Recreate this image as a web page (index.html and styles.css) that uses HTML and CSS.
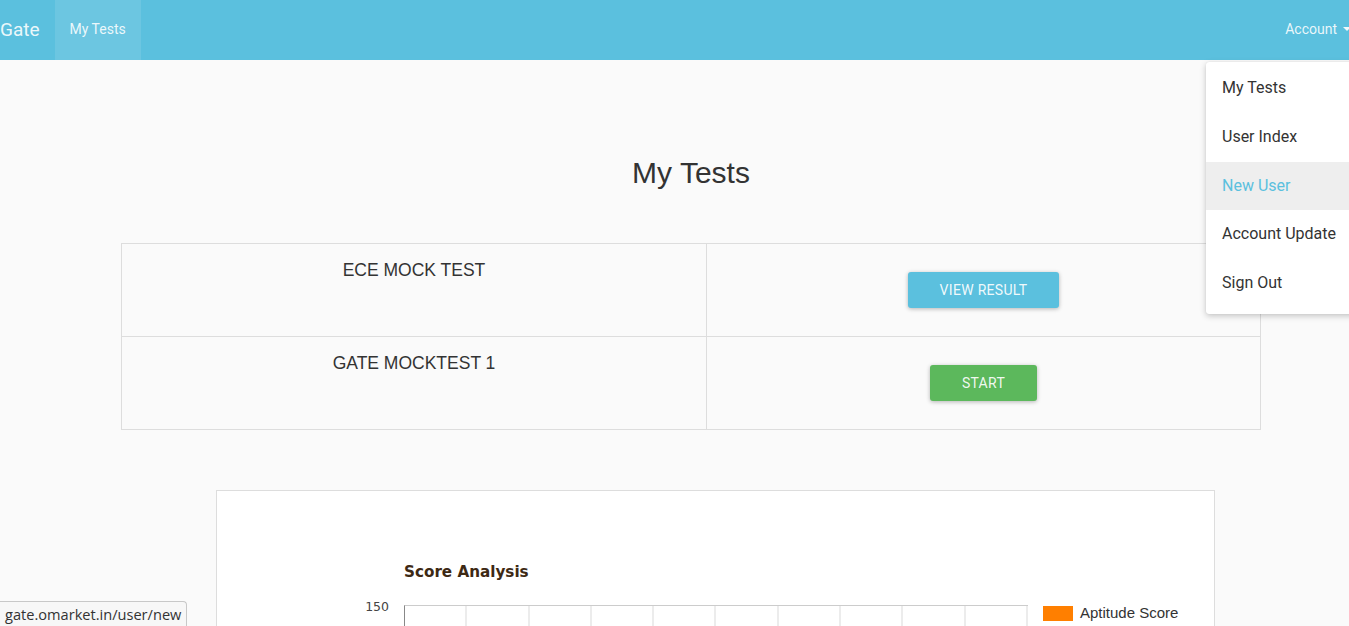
FILE: index.html
```html
<!DOCTYPE html>
<html lang="en">
<head>
<meta charset="utf-8">
<title>My Tests</title>
<link rel="stylesheet" href="styles.css">
</head>
<body>
<div class="page">
  <nav class="navbar">
    <a class="brand" href="#">Gate</a>
    <ul class="nav">
      <li class="nav-item active"><a href="#">My Tests</a></li>
    </ul>
    <ul class="nav nav-right">
      <li class="nav-item dropdown">
        <a href="#">Account<span class="caret"></span></a>
        <ul class="dropdown-menu">
          <li><a href="#">My Tests</a></li>
          <li><a href="#">User Index</a></li>
          <li class="hover"><a href="#">New User</a></li>
          <li><a href="#">Account Update</a></li>
          <li><a href="#">Sign Out</a></li>
        </ul>
      </li>
    </ul>
  </nav>

  <main class="container">
    <h2 class="page-title">My Tests</h2>
    <table class="tests">
      <tr>
        <td class="name-cell"><h4>ECE MOCK TEST</h4></td>
        <td class="action-cell"><a class="btn btn-info" href="#">View Result</a></td>
      </tr>
      <tr>
        <td class="name-cell"><h4>GATE MOCKTEST 1</h4></td>
        <td class="action-cell"><a class="btn btn-success" href="#">Start</a></td>
      </tr>
    </table>

    <section class="chart-panel">
      <div class="chart">
        <div class="chart-title">Score Analysis</div>
        <div class="chart-body">
          <div class="y-axis"><span class="tick">150</span></div>
          <div class="plot">
            <div class="col"></div><div class="col"></div><div class="col"></div><div class="col"></div><div class="col"></div>
            <div class="col"></div><div class="col"></div><div class="col"></div><div class="col"></div><div class="col"></div>
          </div>
          <ul class="legend">
            <li><span class="swatch"></span>Aptitude Score</li>
          </ul>
        </div>
      </div>
    </section>
  </main>
</div>
<div class="statusbar">gate.omarket.in/user/new</div>
</body>
</html>
```

FILE: styles.css
```css
html, body {
  overflow-x: hidden;
}
body {
  margin: 0;
  background: #fafafa;
  font-family: Roboto, "Liberation Sans", Arial, sans-serif;
  color: #333;
}
a { text-decoration: none; }
ul { list-style: none; margin: 0; padding: 0; }

.page {
  width: 1382px;
}

/* Navbar */
.navbar {
  position: relative;
  display: flex;
  align-items: stretch;
  height: 60px;
  background: #5bc0de;
}
.brand {
  display: flex;
  align-items: center;
  padding: 0 15px 1px 0;
  font-size: 19px;
  color: rgba(255,255,255,0.9);
}
.nav {
  display: flex;
}
.nav-right {
  margin-left: auto;
}
.nav-item {
  position: relative;
  display: flex;
}
.nav-item > a {
  display: flex;
  align-items: center;
  padding: 0 15px 2px;
  font-size: 14px;
  color: rgba(255,255,255,0.88);
}
.nav-item.active > a {
  background: #6cc6e1;
}
.dropdown > a {
  padding-left: 16px;
  padding-right: 31px;
}
.caret {
  display: inline-block;
  width: 0;
  height: 0;
  margin-left: 6px;
  border-top: 4px solid rgba(255,255,255,0.9);
  border-left: 4px solid transparent;
  border-right: 4px solid transparent;
}

.dropdown-menu {
  position: absolute;
  top: 62px;
  right: 0;
  width: 176px;
  padding: 2px 0 6px;
  background: #fff;
  border-radius: 3px;
  box-shadow: 0 2px 6px rgba(0,0,0,0.22), 0 0 1px rgba(0,0,0,0.12);
  z-index: 10;
}
.dropdown-menu a {
  display: block;
  padding: 12px 16px;
  line-height: 24.75px;
  font-size: 16px;
  color: #333;
}
.dropdown-menu .hover a {
  background: #eeeeee;
  color: #5bc0de;
}

/* Content */
.container {
  width: 1140px;
  margin: 0 auto;
}
.page-title {
  margin: 97px 0 54px;
  font-family: "Liberation Sans", Arial, sans-serif;
  font-weight: 400;
  font-size: 30px;
  line-height: 32px;
  text-align: center;
  color: #333;
}

.tests {
  width: 100%;
  border-collapse: collapse;
}
.tests td {
  height: 93px;
  padding: 8px;
  border: 1px solid #dddddd;
  box-sizing: border-box;
}
.name-cell {
  width: 585px;
  vertical-align: top;
  text-align: center;
}
.name-cell h4 {
  margin: 9px 0 0;
  font-family: "Liberation Sans", Arial, sans-serif;
  font-weight: 400;
  font-size: 17.5px;
  line-height: 19px;
  color: #333;
}
.action-cell {
  vertical-align: middle;
  text-align: center;
}

.btn {
  display: inline-block;
  height: 36px;
  line-height: 36px;
  padding: 0 32px;
  border-radius: 3px;
  font-size: 14px;
  letter-spacing: 0.3px;
  text-transform: uppercase;
  color: rgba(255,255,255,0.92);
  box-shadow: 0 1px 4px rgba(0,0,0,0.28);
}
.btn-info { background: #5bc0de; }
.btn-success { background: #5cb85c; }

/* Chart panel */
.chart-panel {
  width: 999px;
  height: 400px;
  margin: 60px 0 0 95px;
  box-sizing: border-box;
  background: #fff;
  border: 1px solid #dddddd;
}
.chart {
  padding: 71px 0 0 187px;
}
.chart-title {
  font-family: "DejaVu Sans", Verdana, sans-serif;
  font-weight: 700;
  font-size: 15.2px;
  line-height: 20px;
  color: #3d2914;
}
.chart-body {
  display: flex;
  margin-top: 23px;
  margin-left: -60px;
}
.y-axis {
  width: 45px;
  padding-right: 15px;
  text-align: right;
}
.tick {
  display: block;
  margin-top: -6px;
  font-family: "DejaVu Sans", Verdana, sans-serif;
  font-size: 12.5px;
  line-height: 16px;
  color: #444;
}
.plot {
  display: flex;
  width: 624px;
  height: 250px;
  border-top: 1px solid #cccccc;
  border-left: 1px solid #888888;
  box-sizing: border-box;
}
.col {
  flex: 1;
  border-right: 2px solid #ececec;
}
.legend {
  margin-left: 15px;
}
.legend li {
  display: flex;
  align-items: center;
  font-family: "Liberation Sans", Arial, sans-serif;
  font-size: 15px;
  line-height: 16px;
  color: #333;
}
.swatch {
  display: inline-block;
  width: 30px;
  height: 15px;
  margin-right: 7px;
  background: #ff7f00;
}

/* Browser status bubble */
.statusbar {
  position: fixed;
  left: 0;
  bottom: 0;
  height: 24px;
  padding: 0 5px 0 5px;
  background: #f7f7f7;
  border-top: 1px solid #c8c8c8;
  border-right: 1px solid #c8c8c8;
  border-top-right-radius: 4px;
  font-family: "Open Sans", "Noto Sans", sans-serif;
  font-size: 14.6px;
  line-height: 24px;
  color: #333;
}
```
